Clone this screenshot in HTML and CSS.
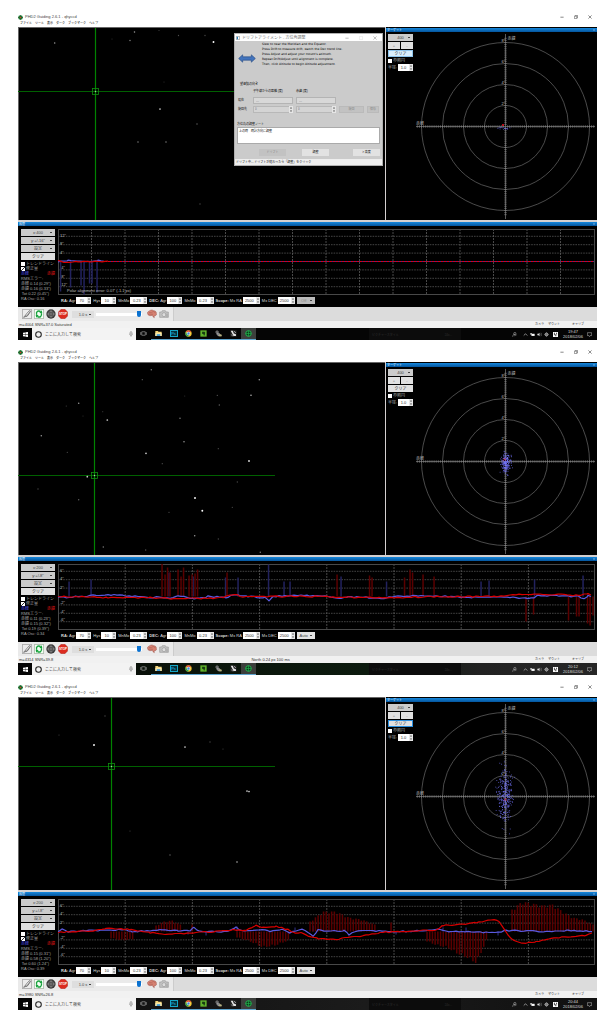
FILE: index.html
```html
<!DOCTYPE html>
<html lang="ja">
<head>
<meta charset="utf-8">
<meta name="viewport" content="width=device-width, initial-scale=1">
<title>PHD2 Guiding 2.6.1 - qhyccd</title>
<link rel="stylesheet" href="styles.css">
</head>
<body>
<svg class="defs" aria-hidden="true">
  <symbol id="logo" viewBox="0 0 12 12"><circle cx="6" cy="6" r="5.6" fill="#1c7a34"/><path d="M6 0v12M0 6h12" stroke="#0c4a1c"/><circle cx="6" cy="6" r="2" fill="#d0402a"/></symbol>
  <symbol id="min" viewBox="0 0 10 10"><path d="M1 5.5h8" stroke="currentColor" stroke-width="1.6"/></symbol>
  <symbol id="max" viewBox="0 0 10 10"><path d="M1 3h6v6H1zM3 3V1h6v6H7" fill="none" stroke="currentColor" stroke-width="1.3"/></symbol>
  <symbol id="box" viewBox="0 0 10 10"><path d="M1 1h8v8H1z" fill="none" stroke="currentColor"/></symbol>
  <symbol id="close" viewBox="0 0 10 10"><path d="M1 1l8 8M9 1L1 9" stroke="currentColor" stroke-width="1.5"/></symbol>
  <symbol id="plug" viewBox="0 0 30 30"><path d="M1 1h28v28H1z" fill="#ececec" stroke="#8a8a8a" stroke-width="2"/><path d="M5 26c1-5 4-4 6-8l9-11c3-3 6-2 5 1l-8 12c-3 4-7 1-9 5" fill="#bbb" stroke="#444" stroke-width="2"/><path d="M13 17l9-10" stroke="#fff" stroke-width="2"/></symbol>
  <symbol id="loop" viewBox="0 0 30 30"><path d="M1 1h28v28H1z" fill="#f4fff4" stroke="#8a9a8a" stroke-width="2"/><path d="M8 17C5 8 13 3 20 8M22 13c3 9-5 14-12 9" fill="none" stroke="#16a13c" stroke-width="4"/><path d="M16 12l9 1-2-9zM14 18l-9-1 2 9z" fill="#16a13c"/></symbol>
  <symbol id="sight" viewBox="0 0 30 30"><circle cx="15" cy="15" r="14" fill="#3c3c3c"/><circle cx="15" cy="15" r="8" fill="none" stroke="#999" stroke-width="1.5"/><path d="M15 2v26M2 15h26" stroke="#aaa" stroke-width="1.5"/></symbol>
  <symbol id="stop" viewBox="0 0 30 30"><path d="M9 1h12l8 8v12l-8 8H9l-8-8V9z" fill="#dc2c20" stroke="#8e2a24"/></symbol>
  <symbol id="brain" viewBox="0 0 30 26"><path d="M2 12C0 6 6 5 8 3c5-3 9-2 12 0 6 0 9 5 8 9 2 6-5 6-7 7l1 5-4-3-2-4C9 19 3 18 2 12z" fill="#d68273" stroke="#9a5146" stroke-width="1.5"/><path d="M6 9c5-3 6 3 10-2s6 3 9 1M6 14c5-3 8 3 12-1" fill="none" stroke="#a65b4e" stroke-width="1.5"/></symbol>
  <symbol id="camera" viewBox="0 0 30 26"><path d="M2 7h6l2-4h9l2 4h7v16H2z" fill="#c4c4c4" stroke="#9a9a9a" stroke-width="2"/><circle cx="15" cy="15" r="6" fill="#ddd" stroke="#999" stroke-width="2"/><path d="M18 12h9v11h-6z" fill="#b0b0b0"/></symbol>
  <symbol id="start" viewBox="0 0 10 10"><path d="M0 1.4l4.4-.6v3.9H0zM5 .7L10 0v4.7H5zM0 5.3h4.4v3.9L0 8.6zM5 5.3h5V10l-5-.7z" fill="#fff"/></symbol>
  <symbol id="ring" viewBox="0 0 10 10"><circle cx="5" cy="5" r="4" fill="none" stroke="#222" stroke-width="1.5"/></symbol>
  <symbol id="mic" viewBox="0 0 10 14"><rect x="3" y="1" width="4" height="7" rx="2" fill="none" stroke="#555" stroke-width="1.2"/><path d="M1 6c0 6 8 6 8 0M5 10v4" fill="none" stroke="#555"/></symbol>
  <symbol id="tasks" viewBox="0 0 20 20"><path d="M5 5h10v10H5zM2 6v8M18 6v8" fill="none" stroke="#bbb" stroke-width="1.6"/></symbol>
  <symbol id="folder" viewBox="0 0 20 20"><path d="M1 3h7l2 2h9v12H1z" fill="#f4d57a"/><path d="M1 8h18v9H1z" fill="#fbe9aa"/><path d="M5 12h10v5H5z" fill="#3d9ad8"/></symbol>
  <symbol id="chrome" viewBox="0 0 20 20"><circle cx="10" cy="10" r="9" fill="#f2c52e"/><path d="M2.2 5.5A9 9 0 0 1 18 6h-8z" fill="#dd4b3e"/><path d="M2.2 5.5A9 9 0 0 0 9 19l4-8H6z" fill="#2da24e"/><circle cx="10" cy="10" r="4" fill="#3f82ea" stroke="#fff" stroke-width="1.5"/></symbol>
  <symbol id="green" viewBox="0 0 20 20"><path d="M1 1h18v18H1z" fill="#62b32c"/><path d="M6 5h7l2 3-2 8h-2l-1-4-4-1z" fill="#173c10"/></symbol>
  <symbol id="scope" viewBox="0 0 20 20"><circle cx="6" cy="6" r="4" fill="#555" stroke="#bbb"/><path d="M6 8l8 3 4 6H9l-4-5z" fill="#888" stroke="#ccc"/><path d="M12 13h7v5h-7z" fill="#b9b27a"/></symbol>
  <symbol id="mount" viewBox="0 0 20 20"><path d="M1 1h18v18H1z" fill="#222"/><path d="M2 2h6l3 8 6 2v5h-7z" fill="#e4e4e4"/><path d="M11 3l6 5M4 13l4 5" stroke="#ccc" stroke-width="2"/></symbol>
  <symbol id="phd" viewBox="0 0 20 20"><circle cx="10" cy="10" r="8" fill="#0a3a1a" stroke="#24c354" stroke-width="2.5"/><path d="M10 2v16M2 10h16" stroke="#24c354" stroke-width="1.6"/></symbol>
  <symbol id="pin" viewBox="0 0 14 14"><circle cx="8" cy="4" r="3" fill="none" stroke="#bbb" stroke-width="1.5"/><path d="M1 13l4-7 4 3-3 3M9 8h4" fill="none" stroke="#bbb" stroke-width="1.5"/></symbol>
  <symbol id="up" viewBox="0 0 14 14"><path d="M2 10l5-5 5 5" fill="none" stroke="#eee" stroke-width="1.6"/></symbol>
  <symbol id="battery" viewBox="0 0 14 14"><path d="M4 5h9v6H4z" fill="#fff"/><path d="M1 3h4v5H1z" fill="#ddd"/></symbol>
  <symbol id="sound" viewBox="0 0 14 14"><path d="M1 5h3l3-3v10L4 9H1z" fill="#ddd"/><path d="M9 4c2 2 2 4 0 6M11 2c3 3 3 7 0 10" fill="none" stroke="#aaa"/></symbol>
  <symbol id="gear" viewBox="0 0 14 14"><circle cx="7" cy="7" r="4" fill="none" stroke="#ccc" stroke-width="2.4"/><path d="M7 1v12M1 7h12" stroke="#ccc"/></symbol>
  <symbol id="ime" viewBox="0 0 14 14"><path d="M0 0h14v14H0z" fill="#fff"/><path d="M4 2v6h4v4M10 2v5" fill="none" stroke="#111" stroke-width="2"/></symbol>
  <symbol id="note" viewBox="0 0 14 14"><path d="M1 2h12v8H9l-2 3-2-3H1z" fill="none" stroke="#ddd" stroke-width="1.3"/></symbol>
  <symbol id="spin" viewBox="0 0 4 7"><path d="M0 0h4v7H0z" fill="#e6e6e6"/><path d="M1 2.6L2 1l1 1.6zM1 4.4L2 6l1-1.6z" fill="#444"/></symbol>
</svg>

<main class="page" id="page"></main>

<template id="window-template">
  <article class="window">
    <header class="title">
      <svg class="title-logo"><use href="#logo"/></svg>
      <h2 class="title-text">PHD2 Guiding 2.6.1 - qhyccd</h2>
      <div class="title-buttons">
        <button aria-label="最小化"><svg><use href="#min"/></svg></button>
        <button aria-label="元に戻す"><svg><use href="#max"/></svg></button>
        <button aria-label="閉じる"><svg><use href="#close"/></svg></button>
      </div>
    </header>
    <nav class="menu">
      <a href="#">ファイル</a><a href="#">ツール</a><a href="#">表示</a><a href="#">ダーク</a><a href="#">ブックマーク</a><a href="#">ヘルプ</a>
    </nav>
    <div class="views">
      <section class="sky">
        <svg class="sky-map" viewBox="0 0 367 193"></svg>
      </section>
      <section class="target">
        <header class="bar"><span>ターゲット</span><button aria-label="閉じる"><svg><use href="#close"/></svg></button></header>
        <div class="target-body">
          <div class="target-controls">
            <select class="drop" aria-label="表示点数"><option>400</option></select>
            <div class="zoom"><button>+</button><button>-</button></div>
            <button class="push clear-target">クリア</button>
            <label class="tick"><input type="checkbox">参照円</label>
            <label class="radius">半径:<span class="spin"><input type="text" value="1.0"><svg><use href="#spin"/></svg></span></label>
          </div>
          <svg class="target-plot" viewBox="0 0 183 188"></svg>
        </div>
      </section>
    </div>
    <section class="history">
      <header class="bar"><span>履歴</span><button aria-label="閉じる"><svg><use href="#close"/></svg></button></header>
      <div class="history-body">
        <div class="history-controls">
          <select class="drop" aria-label="横軸"><option data-field="xscale"></option></select>
          <select class="drop" aria-label="縦軸"><option data-field="yscale"></option></select>
          <select class="drop" aria-label="設定"><option>設定</option></select>
          <button class="push">クリア</button>
          <div class="stats">
            <label class="tick"><input type="checkbox">トレンドライン</label>
            <label class="tick"><input type="checkbox" checked>修正量</label>
            <p class="legend"><span class="ra">赤経</span><span class="dec">赤緯</span></p>
            <p>RMSエラー:</p>
            <p class="rms" data-field="ra"></p>
            <p class="rms" data-field="dec"></p>
            <p class="rms" data-field="tot"></p>
            <p data-field="osc"></p>
          </div>
        </div>
        <div class="history-main">
          <svg class="graph" viewBox="0 0 537 66"></svg>
          <form class="params">
            <label><b>RA:</b> Agr<span class="spin"><input type="text" value="70"><svg><use href="#spin"/></svg></span></label>
            <label>Hys<span class="spin"><input type="text" value="10"><svg><use href="#spin"/></svg></span></label>
            <label>MnMo<span class="spin wide"><input type="text" value="0.23"><svg><use href="#spin"/></svg></span></label>
            <label><b>DEC:</b> Agr<span class="spin"><input type="text" value="100"><svg><use href="#spin"/></svg></span></label>
            <label>MnMo<span class="spin wide"><input type="text" value="0.23"><svg><use href="#spin"/></svg></span></label>
            <label><b>Scope:</b> Mx RA<span class="spin wide"><input type="text" value="2500"><svg><use href="#spin"/></svg></span></label>
            <label>Mx DEC<span class="spin wide"><input type="text" value="2500"><svg><use href="#spin"/></svg></span></label>
            <select class="drop mode" aria-label="赤緯ガイドモード"><option data-field="mode"></option></select>
          </form>
        </div>
      </div>
    </section>
    <div class="tools">
      <div class="tool-strip">
        <button aria-label="接続"><svg><use href="#plug"/></svg></button>
        <button aria-label="ループ"><svg><use href="#loop"/></svg></button>
        <button aria-label="ガイド"><svg><use href="#sight"/></svg></button>
        <button class="stacked stop"><svg><use href="#stop"/></svg><span>STOP</span></button>
        <select class="drop exposure" aria-label="露出時間"><option>1.0 s</option></select>
        <input class="gamma" type="range" min="0" max="100" value="97" aria-label="ガンマ">
        <button aria-label="詳細設定"><svg><use href="#brain"/></svg></button>
        <button aria-label="カメラ設定"><svg><use href="#camera"/></svg></button>
      </div>
    </div>
    <footer class="status">
      <span data-field="star"></span><span class="status-mid" data-field="pulse"></span><span>カメラ</span><span>マウント</span><span class="status-end">キャリブ</span>
    </footer>
    <div class="taskbar">
      <button class="start" aria-label="スタート"><svg><use href="#start"/></svg></button>
      <label class="search"><svg><use href="#ring"/></svg><input type="text" placeholder="ここに入力して検索" aria-label="検索"><svg class="mic"><use href="#mic"/></svg></label>
      <div class="apps">
        <button aria-label="タスクビュー"><svg><use href="#tasks"/></svg></button>
        <button class="open" aria-label="エクスプローラー"><svg><use href="#folder"/></svg></button>
        <button class="open"><span class="photo">Ps</span></button>
        <button class="open" aria-label="Chrome"><svg><use href="#chrome"/></svg></button>
        <button class="open" aria-label="ノート"><svg><use href="#green"/></svg></button>
        <button class="open" aria-label="望遠鏡"><svg><use href="#scope"/></svg></button>
        <button class="open" aria-label="赤道儀"><svg><use href="#mount"/></svg></button>
        <button class="open active" aria-label="PHD2"><svg><use href="#phd"/></svg></button>
      </div>
      <div class="behind"><span>ピクチャースタイル</span><span>24x...</span></div>
      <div class="tray">
        <svg class="pin"><use href="#pin"/></svg><svg><use href="#up"/></svg><svg><use href="#battery"/></svg><svg><use href="#sound"/></svg><svg><use href="#gear"/></svg><svg class="ime"><use href="#ime"/></svg>
        <time class="clock"><span data-field="time"></span><span>2018/02/06</span></time>
        <svg><use href="#note"/></svg>
      </div>
    </div>
  </article>
</template>

<template id="dialog-template">
  <div class="dialog" role="dialog" aria-label="ドリフトアライメント">
    <header class="dialog-title">
      <svg class="dialog-logo" viewBox="0 0 10 10"><path d="M1 1h8v8H1z" fill="#fff" stroke="#555"/><path d="M2 2h3v6H2z" fill="#2a7fb8"/></svg>
      <span>ドリフトアライメント - 方位角調整</span>
      <div class="title-buttons">
        <button aria-label="最小化"><svg><use href="#min"/></svg></button>
        <button aria-label="最大化" disabled><svg><use href="#box"/></svg></button>
        <button aria-label="閉じる"><svg><use href="#close"/></svg></button>
      </div>
    </header>
    <div class="dialog-body">
      <div class="guide">
        <svg class="arrow" viewBox="0 0 54 26"><path d="M2 13L14 2v6h26V2l12 11-12 11v-6H14v6z" fill="#4274bd" stroke="#2c4f85" stroke-width="2"/></svg>
        <p>Slew to near the Meridian and the Equator.<br>Press Drift to measure drift, watch the Dec trend line.<br>Press Adjust and adjust your mount's azimuth.<br>Repeat Drift/Adjust until alignment is complete.<br>Then, click Altitude to begin Altitude adjustment.</p>
      </div>
      <fieldset class="pointing">
        <legend>望遠鏡の向き</legend>
        <span></span><span>子午線からの距離 (度)</span><span>赤緯 (度)</span><span></span><span></span>
        <span>現在</span><input type="text" value="---" aria-label="現在の距離" disabled><input type="text" value="---" aria-label="現在の赤緯" disabled><span></span><span></span>
        <span>旋回先</span>
        <span class="spin"><input type="text" value="0" aria-label="旋回先の距離" disabled><svg><use href="#spin"/></svg></span>
        <span class="spin"><input type="text" value="0" aria-label="旋回先の赤緯" disabled><svg><use href="#spin"/></svg></span>
        <button disabled>旋回</button><button disabled>保存</button>
      </fieldset>
      <label class="memo">方位角の調整ノート<textarea>上の時　時計方向に調整</textarea></label>
      <div class="dialog-actions"><button disabled>ドリフト</button><button>調整</button><button>&gt; 高度</button></div>
    </div>
    <footer class="dialog-status">ドリフト中... ドリフトが終わったら「調整」をクリック</footer>
  </div>
</template>

<script src="app.js"></script>
</body>
</html>
```
FILE: styles.css
```css
* { box-sizing: border-box; }

body {
  margin: 0;
  background: #fff;
  color: #444;
  font: 4px/5px "Liberation Sans", "Noto Sans CJK JP", sans-serif;
}

button, input, select, textarea {
  margin: 0;
  padding: 0;
  border: 0;
  border-radius: 0;
  font: inherit;
  color: inherit;
  background: none;
  min-width: 0;
  appearance: none;
  outline: 0;
}

p, h2, fieldset { margin: 0; padding: 0; border: 0; font-weight: normal; }
svg { display: block; }
.defs { position: absolute; width: 0; height: 0; }

.page { display: grid; gap: 8px; padding: 13px 11px 13px 18px; }
.window { display: flex; flex-direction: column; min-width: 0; }

.title { display: flex; align-items: center; gap: 2px; height: 7px; padding-top: 1px; }
.title-logo { width: 5px; height: 5px; }
.title-text { font-size: 4px; line-height: 6px; color: #444; }
.title-buttons { display: flex; gap: 10px; margin-left: auto; padding-right: 5px; color: #444; }
.title-buttons svg { width: 4px; height: 4px; }
.menu { display: flex; align-items: center; gap: 3px; height: 7px; padding-left: 2px; font-size: 3px; }
.menu a { color: #000; text-decoration: none; }

.views { display: grid; grid-template-columns: 367fr 211fr; gap: 1px; padding-bottom: 2px; background: #d4d0d0; }
.sky { position: relative; background: #000; min-width: 0; }
.sky-map { width: 100%; }
.target { display: flex; flex-direction: column; background: #000; min-width: 0; padding-top: 1px; }
.bar {
  display: flex;
  align-items: center;
  justify-content: space-between;
  height: 4px;
  padding: 0 2px 0 1px;
  color: #e8f6ff;
  font-size: 3px;
  line-height: 4px;
  background: linear-gradient(#1587dc, #04549c);
}
.bar svg { width: 2px; height: 2px; }
.target-body { display: grid; grid-template-columns: 28px 1fr; }
.target-controls { display: flex; flex-direction: column; gap: 1px; padding: 2px 1px 0 2px; color: #bbb; }
.target-plot { width: 100%; }

.drop {
  width: 100%;
  height: 7px;
  padding: 0 5px;
  color: #444;
  text-align: center;
  text-align-last: center;
  background: linear-gradient(#444, #444) right 3px center / 2px 1px no-repeat #cbcbcb;
}
.push, .zoom button { height: 7px; background: #e0e0e0; color: #333; text-align: center; }
.zoom { display: grid; grid-template-columns: 1fr 1fr; gap: 1px; }
.zoom button { color: #777; }
.focus-soft { background: #d9eefc; box-shadow: inset 0 0 0 1px #8fc6ee; }
.focus { box-shadow: inset 0 0 0 1px #2a8ede; }
.tick { display: flex; align-items: center; gap: 1px; height: 5px; color: #aaa; }
.tick input { width: 4px; height: 4px; background: #fff; }
.tick input:checked { background: linear-gradient(135deg, #fff 45%, #333 45%, #333 60%, #fff 60%); }
.radius { display: flex; align-items: center; justify-content: space-between; height: 7px; color: #aaa; }
.spin { display: flex; width: 15px; height: 7px; background: #fff; color: #333; }
.spin input { flex: 1; width: 0; text-align: center; }
.spin svg { width: 4px; height: 7px; }
.wide { width: 17px; }

.history-body { display: grid; grid-template-columns: 34px 1fr; gap: 3px; min-height: 81px; padding: 3px 2px 2px 3px; background: #000; }
.history-controls { display: flex; flex-direction: column; gap: 1px; }
.stats { display: flex; flex-direction: column; color: #aaa; }
.stats .tick { color: #999; }
.legend { display: flex; justify-content: space-between; }
.ra { color: #5454f0; }
.dec { color: #e01414; }
.rms { padding-right: 6px; text-align: right; }
.stats p { white-space: nowrap; }
.history-main { display: flex; flex-direction: column; gap: 2px; min-width: 0; }
.graph { width: 100%; }
.params { display: flex; align-items: center; gap: 2px; padding-left: 3px; color: #ddd; white-space: nowrap; }
.params label { display: flex; align-items: center; gap: 1px; }
.mode { width: 18px; padding: 0 5px 0 1px; background-color: #e2e2e2; }
.mode.off { background-color: #bbb; color: #888; }

.tools { display: flex; height: 14px; background: #dcdcdc; }
.tool-strip { display: flex; align-items: center; gap: 2px; width: 156px; padding: 0 4px; background: #eaeaea; border-right: 1px solid #ccc; }
.tool-strip svg { width: 10px; height: 10px; }
.stacked { display: grid; place-items: center; }
.stacked > * { grid-area: 1 / 1; }
.stop span { color: #fff; font-size: 3px; font-weight: bold; }
.exposure { width: 22px; margin-left: 2px; background-color: #dedede; }
.gamma { width: 46px; height: 7px; margin-right: 3px; background: linear-gradient(#fff, #fff) center / 100% 3px no-repeat; }
.gamma::-webkit-slider-thumb { appearance: none; width: 4px; height: 6px; background: #0b72d0; border-radius: 0 0 2px 2px; }
.status { display: flex; height: 7px; align-items: center; gap: 4px; padding: 0 13px 0 1px; background: #f1f1f1; color: #333; white-space: nowrap; }
.status > span:first-child { flex: 233; width: 0; }
.status-mid { flex: 285; width: 0; }
.status > span { font-size: 4px; }
.status > .status-mid ~ span { font-size: 3px; }
.status-end { margin-left: 8px; }

.taskbar { display: flex; height: 12px; background: #050505; color: #ddd; }
.night { background: linear-gradient(90deg, #050505, #0a140a 30%, #0c1a0e 60%, #222 80%, #262626); }
.dim { background: linear-gradient(90deg, #0e0e0e, #1b1b1b 60%, #101010); }
.start { width: 14px; display: grid; place-items: center; background: #050505; }
.start svg { width: 5px; height: 5px; }
.search { display: flex; align-items: center; gap: 3px; width: 104px; padding: 0 3px; background: #f3f3f3; }
.search svg { width: 7px; height: 7px; }
.search input { flex: 1; color: #444; }
.search input::placeholder { color: #444; opacity: 1; }
.search .mic { width: 4px; height: 6px; }
.apps { display: flex; }
.apps button { width: 15px; display: grid; place-items: center; border-bottom: 1px solid transparent; }
.apps svg { width: 7px; height: 7px; }
.apps .open { border-color: #5fa6d0; }
.apps .active { background: #3c3f3c; }
.photo { width: 8px; height: 7px; border: 1px solid #15a6c6; background: #06303c; color: #25c3e8; line-height: 5px; }
.behind { display: flex; align-items: center; justify-content: space-between; width: 92px; margin-left: auto; padding: 2px 9px 0 3px; background: #0c0c0c; color: #2e2e2e; font-size: 3px; }
.tray { display: flex; align-items: center; gap: 2px; width: 136px; padding-left: 51px; font-size: 3px; line-height: 5px; }
.tray svg { width: 5px; height: 5px; flex: none; }
.tray .pin { margin-right: 4px; }
.tray .ime { margin: 0 3px 0 2px; }
.clock { display: flex; flex-direction: column; align-items: center; width: 20px; font-size: 4px; }
.tray .clock + svg { margin-left: 2px; }

.dialog { position: absolute; top: 6px; right: 2px; width: 149px; color: #111; background: #cbcbcb; font-size: 3px; border: 1px solid #b0b0b0; }
.dialog-title { display: flex; align-items: center; gap: 2px; height: 7px; padding-left: 1px; background: #fff; color: #777; font-size: 4px; }
.dialog .title-buttons { color: #999; }
.dialog .title-buttons button:disabled { opacity: 0.4; }
.dialog-logo { width: 4px; height: 4px; }
.dialog-body { padding: 1px 2px 3px; }
.guide { display: flex; gap: 6px; height: 39px; padding-left: 1px; }
.guide p { font: 3px/5px "DejaVu Sans", sans-serif; color: #000; white-space: nowrap; }
.arrow { width: 18px; height: 9px; margin-top: 12px; }
.pointing { display: grid; grid-template-columns: 12px 40px 40px 25px 12px; align-items: center; gap: 2px 3px; padding: 0 0 3px 1px; }
.pointing legend { display: block; height: 7px; line-height: 6px; }
.pointing > span { height: 7px; line-height: 7px; white-space: nowrap; }
.pointing input { height: 7px; padding-left: 2px; text-align: left; }
.pointing > input { border: 1px solid #b4b4b4; height: 7px; background: #d8d8d8; line-height: 5px; }
.pointing input:disabled { color: #777; }
.pointing .spin { width: 100%; background: #d4d4d4; box-shadow: inset 0 0 0 1px #b8b8b8; }
.pointing button { height: 7px; color: #888; background: #c2c2c2; border: 1px solid #bababa; line-height: 5px; }
.memo { display: block; padding-top: 6px; }
.memo textarea { display: block; width: 100%; height: 17px; padding: 1px; resize: none; background: #fff; border: 1px solid #aaa; color: #111; line-height: 4px; overflow: hidden; }
.dialog-actions { display: grid; grid-template-columns: 43px 51px 27px; justify-content: end; justify-items: start; padding-top: 5px; }
.dialog-actions button { width: 27px; height: 7px; background: #e2e2e2; }
.dialog-actions button:disabled { background: #c2c2c2; color: #888; }
.dialog-status { height: 6px; padding-left: 1px; background: #eee; line-height: 6px; }

.plot-label { font: 4px "Liberation Sans", "Noto Sans CJK JP", sans-serif; fill: #bbb; }
```
FILE: app.js
```js
const NS = "http://www.w3.org/2000/svg";

function add(parent, name, attrs, text) {
  const node = document.createElementNS(NS, name);
  for (const key in attrs) node.setAttribute(key, attrs[key]);
  if (text) node.textContent = text;
  parent.appendChild(node);
  return node;
}

function random(seed) {
  return () => {
    seed = (seed * 16807) % 2147483647;
    return seed / 2147483647;
  };
}

// Stars are [x, y, brightness]; guide is the lock position.
function drawSky(svg, view) {
  const [gx, gy] = view.guide;
  add(svg, "path", { d: "M0 .5H367M.5 0V193", stroke: "#666", "stroke-width": 1 });
  add(svg, "path", { d: `M0 ${gy}H257`, stroke: "#006000", "stroke-width": 1.2 });
  add(svg, "path", { d: `M${gx} 1V193`, stroke: "#008200", "stroke-width": 1.2 });
  add(svg, "rect", { x: gx - 3, y: gy - 3, width: 6, height: 6, fill: "none", stroke: "#109010", "stroke-width": 0.8 });
  for (const [x, y, b] of [...view.stars, [gx, gy, 0.6]]) {
    add(svg, "circle", { cx: x, cy: y, r: 0.5 + b * 0.45, fill: "#fff", opacity: b });
  }
}

function drawTarget(svg, view) {
  const cx = 91.5, cy = 94.5;
  for (const r of [21, 42, 63, 84]) {
    add(svg, "circle", { cx, cy, r, fill: "none", stroke: "#6a6a6a", "stroke-width": 0.7 });
    add(svg, "text", { x: cx - 4, y: cy - r - 1, class: "plot-label" }, `${(r / 21) * 2}"`);
  }
  add(svg, "path", { d: `M2 ${cy}H181M${cx} 2V187`, stroke: "#808080", "stroke-width": 0.7 });
  let ticks = "";
  for (let i = 1; i * 2.1 < 90; i++) {
    for (const s of [-1, 1]) {
      const d = s * i * 2.1;
      ticks += `M${cx + d} ${cy - 1.3}v2.6M${cx - 1.3} ${cy + d}h2.6`;
    }
  }
  add(svg, "path", { d: ticks, stroke: "#8a8a8a", "stroke-width": 0.6 });
  add(svg, "text", { x: cx + 2, y: 7.5, class: "plot-label" }, "赤緯");
  add(svg, "text", { x: 2, y: cy - 2, class: "plot-label" }, "赤経");
  const rnd = random(view.seed);
  const gauss = () => rnd() + rnd() + rnd() + rnd() - 2;
  const s = view.scatter;
  for (let i = 0; i < s.count; i++) {
    const x = cx + s.dx + gauss() * s.sx;
    const y = cy + s.dy + gauss() * s.sy;
    add(svg, "rect", { x, y, width: 0.8, height: 0.8, fill: "#7474ff", opacity: 0.9 });
  }
  const [rx, ry] = s.last;
  add(svg, "path", { d: `M${cx + rx - 1} ${cy + ry - 1}l2 2m0-2l-2 2`, stroke: "#e01020", "stroke-width": 0.8 });
}

// Joins key points with straight runs and adds a small wobble.
function trace(points, wobble, rnd) {
  let d = "";
  for (let i = 0; i < points.length - 1; i++) {
    const [x0, y0] = points[i], [x1, y1] = points[i + 1];
    for (let x = x0; x < x1; x += 3) {
      const y = y0 + ((y1 - y0) * (x - x0)) / (x1 - x0) + (rnd() - 0.5) * wobble;
      d += `${d ? "L" : "M"}${x.toFixed(1)} ${(32.5 - y).toFixed(1)}`;
    }
  }
  return d;
}

function drawGraph(svg, view) {
  const mid = 32.5;
  let cols = "";
  for (let x = view.column; x < 530; x += view.column) cols += `M${x} 0V66`;
  add(svg, "path", { d: cols, stroke: "#5a5a5a", "stroke-width": 0.8, "stroke-dasharray": "2 1" });
  let rows = "";
  for (let i = -3; i <= 3; i++) if (i) rows += `M0 ${mid + i * 8.4}H537`;
  add(svg, "path", { d: rows, stroke: "#606060", "stroke-width": 0.7, "stroke-dasharray": "1.6 1" });
  add(svg, "rect", { x: 0.5, y: 0.5, width: 536, height: 65, fill: "none", stroke: "#484848" });
  for (const i of [3, 2, 1, -1, -2, -3]) {
    add(svg, "text", { x: 2, y: mid - i * 8.4 - 0.5 + (i < 0 ? 0 : 1), class: "plot-label" }, `${i * view.step}"`);
  }
  const bars = (list, color) => {
    for (const [x, h] of list) {
      add(svg, "rect", { x: x - 0.7, y: h > 0 ? mid - h : mid, width: 1.5, height: Math.abs(h), fill: color });
    }
  };
  bars(view.raBars, "#22225e");
  bars(view.decBars, "#5a0000");
  const rnd = random(view.seed);
  if (view.flatFrom) {
    add(svg, "path", { d: `M${view.flatFrom} ${mid}H536`, stroke: "#4a2890", "stroke-width": 1 });
    add(svg, "path", { d: `M${view.flatFrom} ${mid}H536`, stroke: "#d80018", "stroke-width": 1, "stroke-dasharray": "2 1" });
  }
  const line = (points, color) => add(svg, "path", {
    d: trace(points, view.wobble, rnd), fill: "none", stroke: color, "stroke-width": 1.2, "stroke-linejoin": "round"
  });
  line(view.raLine, "#5a5ae0");
  line(view.decLine, "#d80000");
  if (view.note) add(svg, "text", { x: 9, y: 63, class: "plot-label" }, view.note);
}

function comb(from, to, heights) {
  const list = [];
  const n = Math.round((to - from) / 2.7);
  for (let i = 0; i <= n; i++) {
    const t = (i / n) * (heights.length - 1), k = Math.min(Math.floor(t), heights.length - 2);
    const h = heights[k] + (heights[k + 1] - heights[k]) * (t - k);
    list.push([from + i * 2.7, h * (i % 3 === 1 ? 0.9 : 1)]);
  }
  return list;
}

const sessions = [
  {
    xscale: "x:400", yscale: "y:+/-16\"", ra: "赤経 0.14 (0.29\")", dec: "赤緯 0.16 (0.33\")", tot: "Tot 0.22 (0.45\")", osc: "RA Osc: 0.16",
    mode: "Off", star: "m=4004 SNR=37.0 Saturated", pulse: "", time: "19:47", focus: "focus-soft", dialog: true,
    guide: [77.5, 64.5], seed: 11, column: 33.5, step: 4, wobble: 0.9, flatFrom: 50,
    stars: [[36.7, 16, .6], [116.5, 5, .6], [112, 13.5, .5], [160.5, 8.5, .3], [187, 8.5, .3], [195.5, 15, 1], [142, 82, .8], [120, 115, .5], [148, 115, .5], [179, 97, .4], [182, 177, .3], [141, 3.5, .25], [146, 55, .2], [94, 12, .2]],
    scatter: { count: 14, dx: -2, dy: 1, sx: 5, sy: 2, last: [-2.5, -1.5] },
    raBars: [[2.5, -30], [12.5, -26], [23, -24], [26, -33], [31.5, -22], [34, -22], [39, -31]], decBars: [],
    raLine: [[0, 0], [10, 1], [30, 0], [40, 1], [52, 0]], decLine: [[0, 1], [6, -1], [20, 0], [52, 0]],
    note: "Polar alignment error: 0.07' (-1.1 px)"
  },
  {
    xscale: "x:200", yscale: "y:+/-8\"", ra: "赤経 0.11 (0.23\")", dec: "赤緯 0.15 (0.32\")", tot: "Tot 0.19 (0.39\")", osc: "RA Osc: 0.34",
    mode: "Auto", star: "m=4314 SNR=39.8", pulse: "North 0.24 px 100 ms", time: "20:12", focus: "", taskbar: "night",
    guide: [76.5, 113.5], seed: 42, column: 67.2, step: 2, wobble: 1.4,
    stars: [[133.3, 7.7, .5], [124.3, 17.7, .35], [241.3, 17.7, .6], [199.3, 33.3, .35], [233, 33.3, .7], [201.3, 43, .4], [60.7, 41.3, .6], [48.3, 44, .25], [89.3, 58, .8], [162, 56.3, .5], [23.3, 73.7, .6], [166, 79.7, .6], [128, 91.3, .8], [49.3, 90.3, .3], [200.3, 86.7, .3], [231, 99, .9], [69.3, 114.7, .8], [144.3, 101.7, .3], [219.3, 120, .3], [20, 127, .3], [60.7, 137.7, .4], [177, 136, 1], [184.3, 148.7, 1], [176.7, 173.7, .6], [200.3, 177, .3], [85.3, 185, .5], [127.7, 188, .35], [242.3, 190.3, .5], [151, 150.3, .3], [214.3, 145.3, .3], [65, 54, .2], [166.7, 34, .2], [84.7, 49.7, .2]],
    scatter: { count: 200, dx: 0.5, dy: 1, sx: 4, sy: 8, last: [-1, -2] },
    raBars: [[11, 15], [33, 17], [111, 24], [135, 20], [167.5, 19], [180, 19], [210.5, 32], [226, 15], [232, 15], [283, 20], [328.5, 15], [423, 15], [431, 16], [476.5, 17], [525, 21]],
    decBars: [[104, 33], [107, 22], [109.5, 29], [112, 24], [120, 27], [123, 20], [125.5, 29], [131, 21], [134, 22], [137, 23], [139.5, 27], [169, 24], [279, 22], [311.5, 21], [314, 19], [346.5, 19], [352, 27], [354.5, 24], [365, 22], [376, 20], [468, -25], [475.5, -18], [510.5, -24], [518.5, -20], [521, -20], [529.5, -27], [532, -29], [535, -19]],
    raLine: [[0, 0], [8, -1], [35, 1], [50, 2], [80, 0], [100, -1], [112, -2], [120, 1], [136, -2], [150, 0], [170, -1], [176, 2], [190, 0], [207, -1], [211, -4], [215, 0], [240, 1], [270, 0], [283, -2], [290, 0], [328, -2], [334, 0], [360, 1], [420, -1], [440, 0], [476, -2], [480, 1], [520, 0], [526, -2], [530, 1], [536, 0]],
    decLine: [[0, 0], [50, -1], [95, -1], [110, -2], [140, -2], [165, -1], [176, 2], [185, 0], [260, 0], [300, -1], [345, -1], [370, 0], [440, 0], [458, 2], [500, 2], [520, 1], [530, 3], [536, 1]]
  },
  {
    xscale: "x:200", yscale: "y:+/-8\"", ra: "赤経 0.15 (0.31\")", dec: "赤緯 0.58 (1.20\")", tot: "Tot 0.60 (1.24\")", osc: "RA Osc: 0.39",
    mode: "Auto", star: "m=3980 SNR=26.8", pulse: "", time: "20:44", focus: "focus", taskbar: "dim",
    guide: [93.5, 69.5], seed: 77, column: 67.2, step: 2, wobble: 1.2,
    stars: [[76, 48, 1], [167, 50, .8], [192, 45, .3], [229, 94, .8], [231, 94.5, .8], [219, 165, .7], [87, 19, .3], [152, 158, .4], [112, 134, .25], [41, 38, .25], [205, 52, .25]],
    scatter: { count: 300, dx: -1, dy: 0, sx: 6, sy: 25, last: [0, 3] },
    raBars: [[130, -3], [148, -4], [179, 5], [237, 4], [255, 6], [338, -3], [385, 4], [408, 4], [440, -4]],
    decBars: [...comb(53, 74, [-7, -9, -8]), ...comb(98, 121, [6, 10, 11, 7]), [134, 7], ...comb(179, 230, [-6, -10, -16, -14, -9]), ...comb(252, 318, [10, 20, 20, 14, 12, 7]), [333, 9], ...comb(369, 429, [-10, -14, -16, -22, -26, -32, -9]), ...comb(454, 535, [22, 30, 28, 26, 27, 20, 14, 12, 7])],
    raLine: [[0, 0], [4, 3], [10, 0], [40, 1], [67, 2], [74, 0], [96, 1], [104, 2], [120, 1], [132, 1], [136, 4], [142, 0], [170, 0], [178, 4], [186, 0], [204, 2], [212, 0], [224, 2], [232, -1], [244, 2], [250, -1], [255, -5], [260, 2], [270, 0], [286, 1], [291, -3], [300, 1], [350, 0], [382, 2], [392, 0], [440, -1], [448, 1], [485, 0], [510, 1], [536, 0]],
    decLine: [[0, -1], [18, 0], [35, 1], [48, 3], [73, 2], [92, -1], [108, -3], [141, -1], [158, 0], [175, 2], [188, 1], [198, 6], [205, 4], [218, 5], [230, 2], [237, -2], [243, -1], [250, -5], [260, -7], [275, -8], [308, -4], [322, -1], [341, 0], [365, 1], [378, 1], [385, 6], [402, 7], [418, 9], [436, 12], [441, 10], [450, -4], [455, -9], [465, -12], [478, -10], [501, -6], [518, -5], [528, -4], [536, 0]]
  }
];

const template = document.getElementById("window-template");
const page = document.getElementById("page");

for (const session of sessions) {
  const win = template.content.cloneNode(true).firstElementChild;
  for (const node of win.querySelectorAll("[data-field]")) node.textContent = session[node.dataset.field];
  if (session.focus) win.querySelector(".clear-target").classList.add(session.focus);
  if (session.taskbar) win.querySelector(".taskbar").classList.add(session.taskbar);
  if (session.mode === "Off") win.querySelector(".mode").classList.add("off");
  drawSky(win.querySelector(".sky-map"), session);
  drawTarget(win.querySelector(".target-plot"), session);
  drawGraph(win.querySelector(".graph"), session);
  if (session.dialog) {
    win.querySelector(".sky").appendChild(document.getElementById("dialog-template").content.cloneNode(true));
  }
  page.appendChild(win);
}
```
